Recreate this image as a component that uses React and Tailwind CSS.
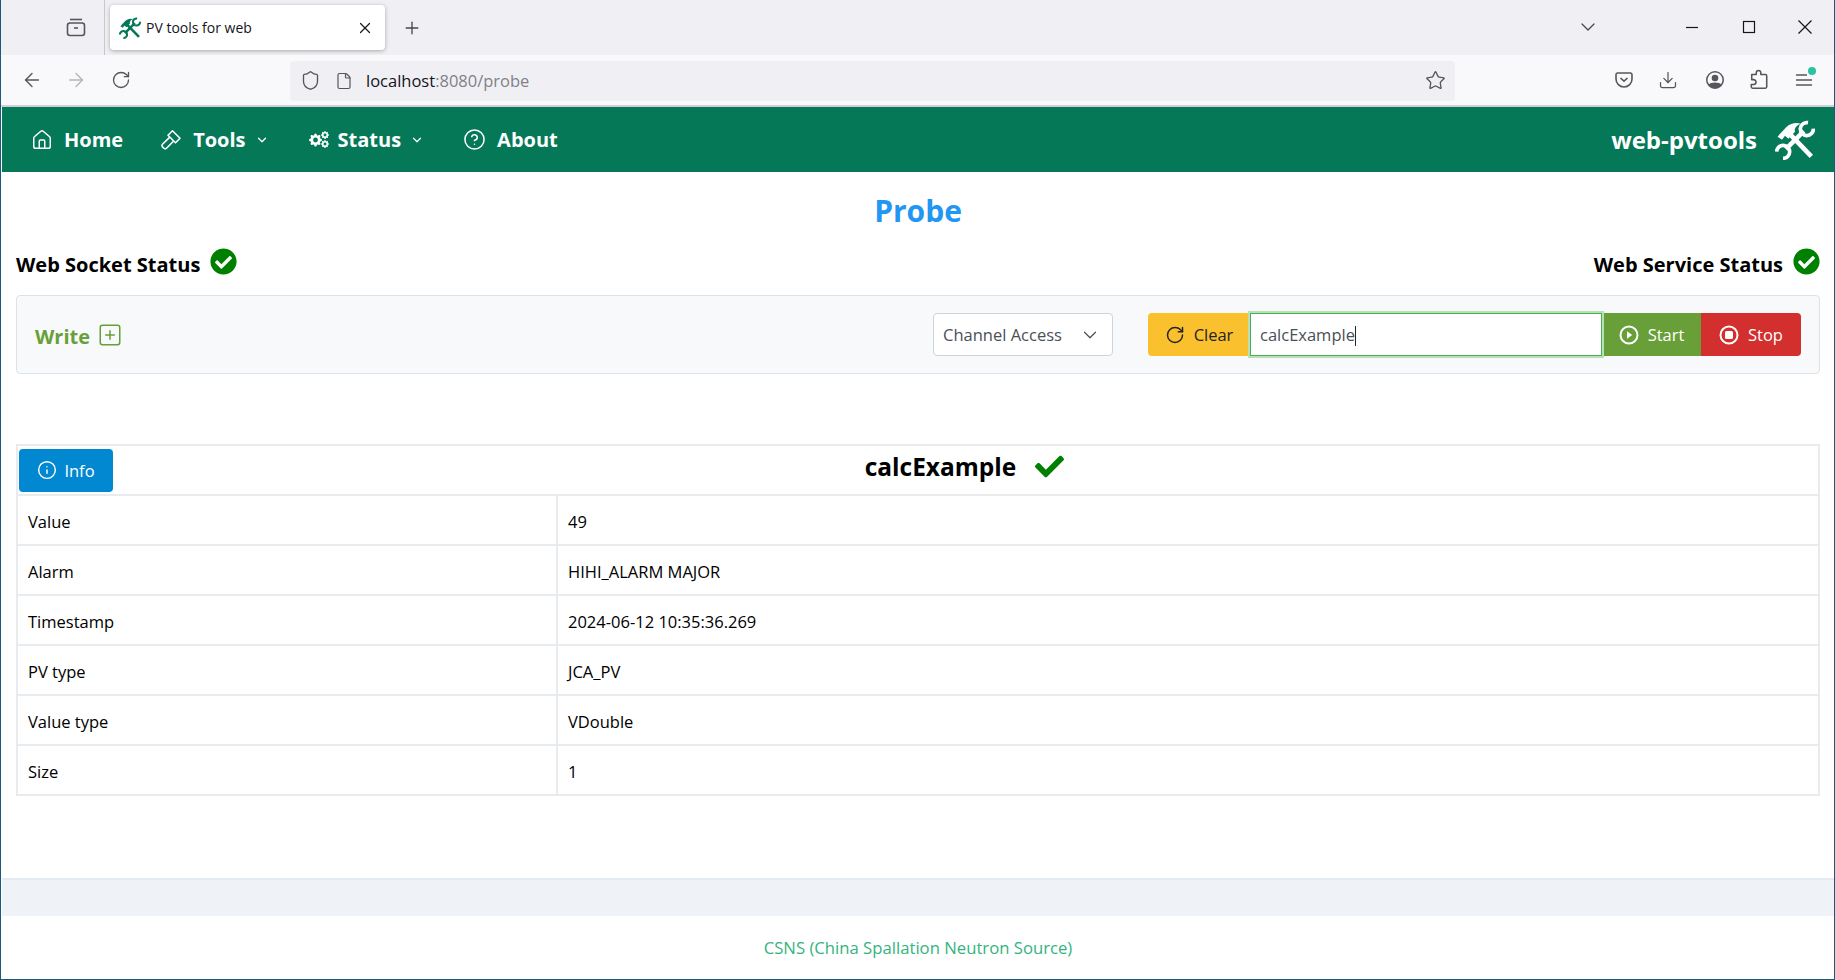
import React from "react";
import { FaCheckCircle, FaCheck } from "react-icons/fa";
import { BsGearFill } from "react-icons/bs";
import { ChevronDown, Home, CircleHelp, RotateCw, Info, SquarePlus, ArrowLeft, ArrowRight, Shield, File, Star, Download, Plus, X } from "lucide-react";

function ToolsIcon({ size, className }) {
  return (
    <svg width={size} height={size} viewBox="0 0 24 24" fill="none" stroke="currentColor" className={className}>
      <path d="M8.500 8l13.300 13.800" strokeWidth="2.800" />
      <path d="M1.500 10L7 4Q10.800 1 15.500 2.200Q12.300 3.300 11.800 5.800L12 7L8 11.200L6 9.400L4.200 11.800Z" fill="currentColor" stroke="none" />
      <path d="M6.500 17.500L17.300 6.700" strokeWidth="2.700" />
      <path d="M19.800 1.600A3.900 3.900 0 1 0 23 5.200" strokeWidth="2.200" />
      <path d="M4.800 23A3.900 3.900 0 1 0 1 19" strokeWidth="2.200" />
    </svg>
  );
}

function HammerIcon() {
  return (
    <svg width="22" height="22" viewBox="0 0 22 22" fill="none" stroke="currentColor" strokeWidth="1.600" strokeLinejoin="round">
      <path d="M12.500 1.800L20 9.300L15.500 13.800L8 6.300Z" />
      <path d="M9.800 8.100L2.500 15.300a1.800 1.800 0 0 0 0 2.600L3.900 19.300a1.800 1.800 0 0 0 2.600 0L13.700 12" />
    </svg>
  );
}

function Gears() {
  return (
    <span className="flex items-center w-[20px] h-[20px]">
      <BsGearFill size={14} className="mt-[1px]" />
      <span className="flex flex-col gap-[1px] ml-[-1px]">
        <BsGearFill size={8} />
        <BsGearFill size={8} />
      </span>
    </span>
  );
}

function NavItem({ icon, label, chevron, className, gap = "ml-[11px]", chevGap = "ml-[9px]" }) {
  return (
    <div className={"flex items-center " + className}>
      {icon}
      <span className={"text-[20px] font-bold leading-none " + gap}>{label}</span>
      {chevron && <ChevronDown size={14} strokeWidth={2.2} className={chevGap} />}
    </div>
  );
}

function Row({ k, v }) {
  return (
    <tr className="h-[50px]">
      <td className="border-2 border-[#e9ecef] pl-[10px] pt-[4px]">{k}</td>
      <td className="border-2 border-[#e9ecef] pl-[10px] pt-[4px]">{v}</td>
    </tr>
  );
}

function Btn({ bg, icon, label, w, text = "text-white", rounded = "" }) {
  return (
    <button className={"h-[43px] flex items-center justify-center gap-[9px] text-[16.5px] " + bg + " " + text + " " + w + " " + rounded}>
      {icon}
      <span className="pt-[2px]">{label}</span>
    </button>
  );
}

function PlayIcon() {
  return (
    <svg width="20" height="20" viewBox="0 0 20 20" fill="none" stroke="currentColor" strokeWidth="2">
      <circle cx="10" cy="10" r="8.500" />
      <path d="M8 6.200L13.200 10L8 13.800Z" fill="currentColor" stroke="none" />
    </svg>
  );
}

function StopIcon() {
  return (
    <svg width="20" height="20" viewBox="0 0 20 20" fill="none" stroke="currentColor" strokeWidth="2">
      <circle cx="10" cy="10" r="8.500" />
      <rect x="6" y="6" width="8" height="8" rx="1.500" fill="currentColor" stroke="none" />
    </svg>
  );
}

export default function App() {
  return (
    <div className="w-[1835px] h-[980px] overflow-hidden flex flex-col bg-white border-x border-b border-[#1b5b7a] font-['Open_Sans','Noto_Sans',sans-serif] text-[#000]">
      {/* tab strip */}
      <div className="h-[55px] shrink-0 bg-[#f0f0f4] flex items-start">
        <div className="w-[104px] h-[55px] border-r border-[#c8c8cc] flex items-center justify-end pr-[18px] pb-[1px]">
          <svg width="20" height="20" viewBox="0 0 20 20" fill="none" stroke="#55555c" strokeWidth="1.600">
            <path d="M4 2.500h12" />
            <rect x="1.500" y="6" width="17" height="12.500" rx="2.500" />
            <path d="M8 11h4" />
          </svg>
        </div>
        <div className="ml-[5px] mt-[5px] w-[275px] h-[45px] bg-white rounded-[4px] shadow-[0_1px_4px_rgba(0,0,0,0.3)] flex items-center pl-[9px] pr-[11px]">
          <ToolsIcon size={22} className="text-[#047857]" />
          <span className="ml-[5px] text-[14px] text-[#15141a] flex-1">PV tools for web</span>
          <X size={18} strokeWidth={1.6} className="text-[#15141a]" />
        </div>
        <Plus size={20} strokeWidth={1.6} className="ml-[17px] mt-[18px] text-[#45454d]" />
        <div className="flex-1" />
        <ChevronDown size={24} strokeWidth={1.3} className="mt-[15px] mr-[84px] text-[#45454d]" />
        <svg width="16" height="16" viewBox="0 0 16 16" stroke="#15141a" strokeWidth="1.200" className="mt-[19px] mr-[41px]">
          <path d="M2 8.500h12" />
        </svg>
        <svg width="16" height="16" viewBox="0 0 16 16" fill="none" stroke="#15141a" strokeWidth="1.200" className="mt-[19px] mr-[40px]">
          <rect x="2.500" y="2.500" width="11" height="11" />
        </svg>
        <svg width="16" height="16" viewBox="0 0 16 16" stroke="#15141a" strokeWidth="1.200" className="mt-[19px] mr-[21px]">
          <path d="M1.500 1.500L14.500 14.500M14.500 1.500L1.500 14.500" />
        </svg>
      </div>
      {/* toolbar */}
      <div className="h-[52px] shrink-0 bg-[#f9f9fb] border-b-2 border-[#cfcfd8] flex items-center text-[#55555c]">
        <ArrowLeft size={22} strokeWidth={1.5} className="ml-[20px]" />
        <ArrowRight size={22} strokeWidth={1.5} className="ml-[22px] text-[#b4b4bb]" />
        <RotateCw size={20} strokeWidth={1.6} className="ml-[24px]" />
        <div className="ml-[159px] w-[1165px] h-[40px] mt-[1px] bg-[#f0f0f4] rounded-[4px] flex items-center pl-[10px] pr-[9px]">
          <Shield size={21} strokeWidth={1.5} />
          <File size={18} strokeWidth={1.6} className="ml-[14px]" />
          <span className="ml-[13px] pt-[2px] text-[16.5px] text-[#15141a]">localhost<span className="text-[#808087]">:8080/probe</span></span>
          <div className="flex-1" />
          <Star size={21} strokeWidth={1.5} />
        </div>
        <div className="flex-1" />
        <svg width="20" height="20" viewBox="0 0 20 20" fill="none" stroke="currentColor" strokeWidth="1.600" className="mr-[24px]">
          <path d="M3.500 3h13A1.800 1.800 0 0 1 18 4.800V9a8 8 0 0 1-16 0V4.800A1.800 1.800 0 0 1 3.500 3z" />
          <path d="M6.500 8l3.500 3.200L13.500 8" />
        </svg>
        <Download size={20} strokeWidth={1.5} className="mr-[27px]" />
        <svg width="20" height="20" viewBox="0 0 20 20" className="mr-[24px]" fill="currentColor">
          <path fillRule="evenodd" d="M10 1a9 9 0 1 0 0 18 9 9 0 0 0 0-18zm0 1.600a7.400 7.400 0 0 1 6 11.700c-.8-1-3-1.800-6-1.800s-5.200.8-6 1.800A7.400 7.400 0 0 1 10 2.600z" />
          <circle cx="10" cy="8" r="3.300" />
        </svg>
        <svg width="20" height="22" viewBox="0 0 22 24" fill="none" stroke="currentColor" strokeWidth="1.700" strokeLinejoin="round" className="mr-[26px]">
          <path d="M8 6V4a2.500 2.500 0 0 1 5 0v2h5a1.500 1.500 0 0 1 1.500 1.500v12a1.500 1.500 0 0 1-1.500 1.500H4a1.500 1.500 0 0 1-1.500-1.500V17H5a2.700 2.700 0 0 0 0-5.400H3V6z" />
        </svg>
        <div className="relative mr-[21px]">
          <svg width="18" height="14" viewBox="0 0 18 14" stroke="currentColor" strokeWidth="1.500" className="block">
            <path d="M1 2h11M1 7h16M1 12h16" />
          </svg>
          <span className="absolute right-[-3px] top-[-6px] w-[8px] h-[8px] rounded-full bg-[#2ac3a2]" />
        </div>
      </div>
      {/* page */}
      <div className="ml-px flex-1 flex flex-col">
        <div className="h-[65px] shrink-0 bg-[#047857] text-white flex items-center">
          <NavItem className="ml-[29px]" icon={<Home size={22} strokeWidth={1.6} />} label="Home" />
          <NavItem className="ml-[37px]" icon={<HammerIcon />} label="Tools" chevron />
          <NavItem className="ml-[40px]" gap="ml-[9px]" icon={<Gears />} label="Status" chevron />
          <NavItem className="ml-[39px]" icon={<CircleHelp size={23} strokeWidth={1.6} />} label="About" />
          <div className="flex-1" />
          <span className="text-[24px] font-bold leading-none">web-pvtools</span>
          <ToolsIcon size={40} className="ml-[18px] mr-[19px]" />
        </div>
        <div className="h-[708px] shrink-0 bg-white border-b-2 border-[#e4eaf1] px-[14px] flex flex-col">
          <div className="h-[76px] shrink-0 flex items-center justify-center text-[#2196f3] text-[30px] font-bold">Probe</div>
          <div className="h-[47px] shrink-0 flex justify-between items-start text-[20px] font-bold">
            <div className="flex items-center h-[27px]">
              <span className="mt-[6px]">Web Socket Status</span>
              <FaCheckCircle size={27} className="ml-[10px] text-[#008000]" />
            </div>
            <div className="flex items-center h-[27px]">
              <span className="mt-[6px]">Web Service Status</span>
              <FaCheckCircle size={27} className="ml-[10px] text-[#008000]" />
            </div>
          </div>
          <div className="h-[79px] shrink-0 bg-[#f8f9fa] border border-[#dee2e6] rounded-[4px] flex items-center pl-[18px] pr-[18px]">
            <span className="text-[20px] font-bold text-[#689f38] pt-[4px]">Write</span>
            <SquarePlus size={26} strokeWidth={1.4} className="ml-[7px] text-[#689f38]" />
            <div className="flex-1" />
            <div className="w-[180px] h-[43px] bg-white border border-[#ced4da] rounded-[4px] flex items-center justify-between pl-[9px] pr-[11px] text-[16.5px] text-[#495057]">
              <span className="pt-[2px]">Channel Access</span>
              <ChevronDown size={22} strokeWidth={1.3} />
            </div>
            <div className="flex ml-[35px] items-center">
              <Btn bg="bg-[#fbc02d]" text="text-[#212529]" w="w-[102px]" rounded="rounded-l-[4px]" icon={<RotateCw size={20} strokeWidth={1.8} />} label="Clear" />
              <div className="w-[352px] h-[43px] bg-white border border-[#4caf50] shadow-[0_0_0_2px_#b7e0b8] relative z-10 flex items-center pl-[9px] pt-[2px] text-[16.5px] text-[#495057]">
                calcExample<span className="w-px h-[20px] bg-[#212529]" />
              </div>
              <Btn bg="bg-[#689f38]" w="w-[99px]" icon={<PlayIcon />} label="Start" />
              <Btn bg="bg-[#d32f2f]" w="w-[100px]" rounded="rounded-r-[4px]" icon={<StopIcon />} label="Stop" />
            </div>
          </div>
          <table className="mt-[70px] w-full border-collapse text-[16.5px] text-[#000] table-fixed">
            <colgroup>
              <col className="w-[540px]" />
              <col />
            </colgroup>
            <tbody>
              <tr className="h-[50px]">
                <td colSpan={2} className="border-2 border-[#e9ecef] pl-[1px] py-0">
                  <div className="flex items-center">
                    <button className="w-[94px] h-[43px] bg-[#0288d1] rounded-[4px] text-white text-[16.5px] flex items-center justify-center gap-[7px]">
                      <Info size={20} strokeWidth={1.7} />
                      <span className="pt-[2px]">Info</span>
                    </button>
                    <div className="flex-1 flex items-center justify-center mb-[5px] pr-[2px]">
                      <span className="text-[24.5px] font-bold">calcExample</span>
                      <FaCheck size={29} className="ml-[19px] mb-[2px] text-[#008000]" />
                    </div>
                  </div>
                </td>
              </tr>
              <Row k="Value" v="49" />
              <Row k="Alarm" v="HIHI_ALARM MAJOR" />
              <Row k="Timestamp" v="2024-06-12 10:35:36.269" />
              <Row k="PV type" v="JCA_PV" />
              <Row k="Value type" v="VDouble" />
              <Row k="Size" v="1" />
            </tbody>
          </table>
        </div>
        <div className="h-[36px] shrink-0 bg-[#eff3f8]" />
        <div className="flex-1 bg-white flex items-center justify-center text-[16.7px] text-[#34b37e]">CSNS (China Spallation Neutron Source)</div>
      </div>
    </div>
  );
}
